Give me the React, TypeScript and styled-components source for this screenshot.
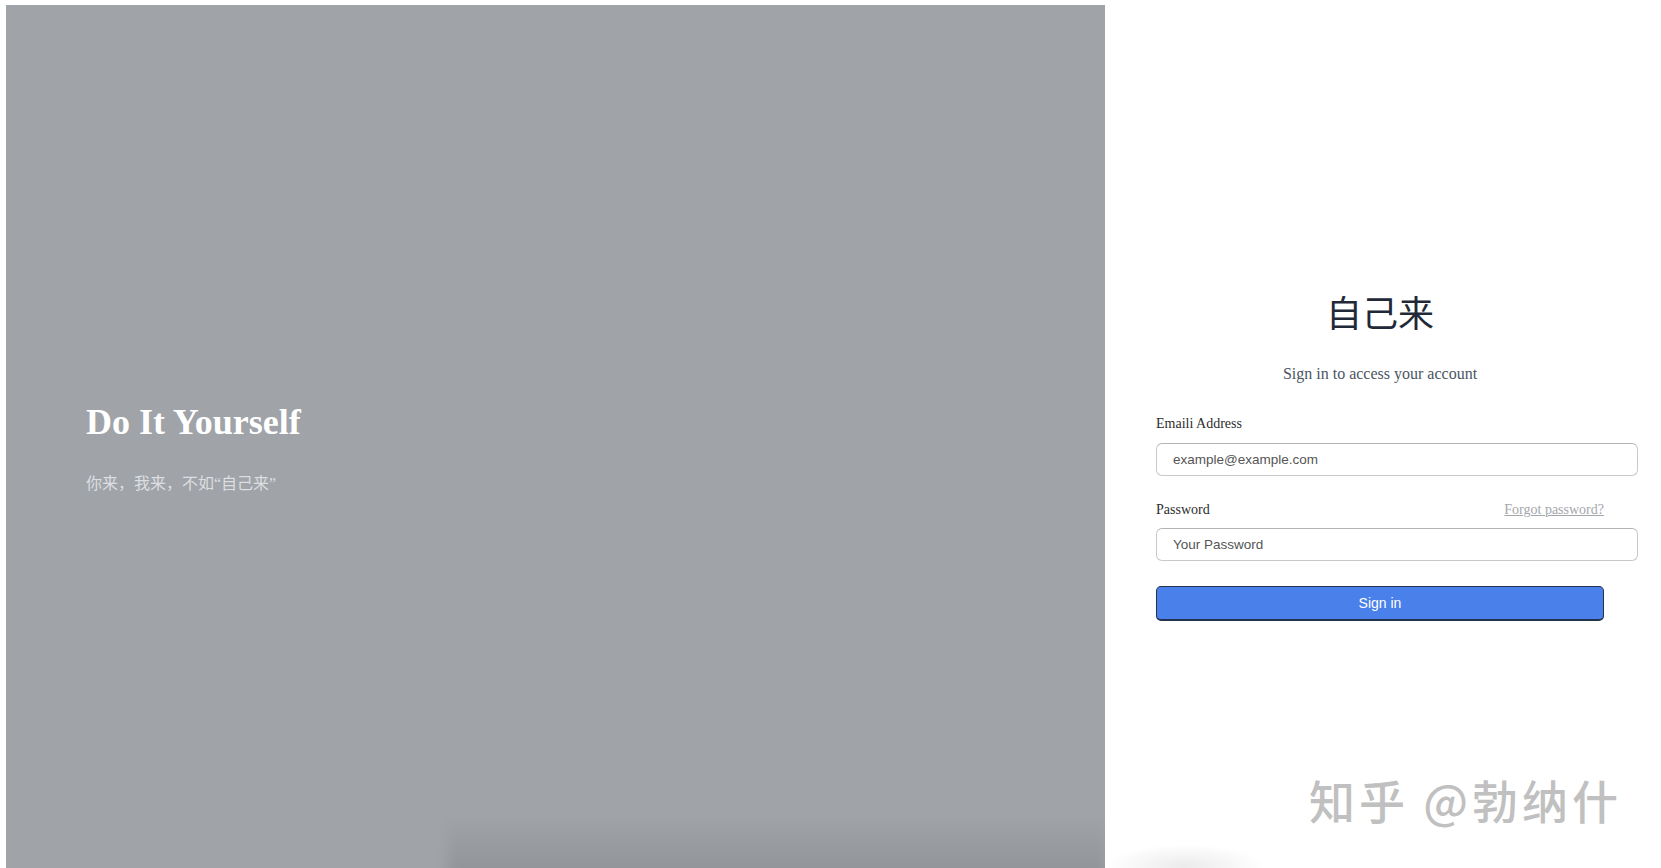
import React from 'react'
import styled, { createGlobalStyle } from 'styled-components'

const GlobalStyle = createGlobalStyle`
    html, body {
        margin: 0;
        padding: 0;
        background: #ffffff;
    }
    * {
        box-sizing: border-box;
    }
`

const Page = styled.div`
    position: relative;
    display: flex;
    width: 1661px;
    height: 868px;
    padding: 5px 0 0 6px;
    overflow: hidden;
    background: #ffffff;
`
const Hero = styled.section`
    position: relative;
    width: 1099px;
    height: 863px;
    background-color: #a0a3a8;
    display: flex;
    flex-direction: column;
    justify-content: flex-start;
    padding: 395px 0 0 80px;
    overflow: hidden;
`
const HeroShade = styled.div`
    position: absolute;
    left: 442px;
    right: 0;
    bottom: -10px;
    height: 60px;
    background: linear-gradient(to bottom, rgba(0, 0, 0, 0), rgba(0, 0, 0, 0.1));
    filter: blur(6px);
`
const HeroTitle = styled.h1`
    margin: 0;
    font-family: "Liberation Serif", "Noto Sans CJK SC", serif;
    font-weight: 700;
    font-size: 36px;
    line-height: 44px;
    color: #ffffff;
`
const HeroText = styled.p`
    margin: 28px 0 0 0;
    font-family: "Liberation Serif", "Noto Sans CJK SC", serif;
    font-size: 16px;
    line-height: 24px;
    color: #dcdee1;
`
const Side = styled.section`
    flex: 1;
    display: flex;
    flex-direction: column;
    padding: 288px 0 0 51px;
`
const Form = styled.form`
    width: 448px;
    display: flex;
    flex-direction: column;
`
const Title = styled.h2`
    margin: 0;
    text-align: center;
    font-family: "Liberation Serif", "Noto Sans CJK SC", serif;
    font-weight: 400;
    font-size: 36px;
    line-height: 44px;
    color: #1f2937;
`
const Subtitle = styled.p`
    margin: 25px 0 0 0;
    text-align: center;
    font-family: "Liberation Serif", serif;
    font-size: 16px;
    line-height: 24px;
    color: #4b5563;
`
const LabelRow = styled.div<{ $top: number }>`
    display: flex;
    justify-content: space-between;
    align-items: center;
    margin-top: ${props => props.$top}px;
    height: 20px;
`
const Label = styled.label`
    font-family: "Liberation Serif", serif;
    font-size: 14px;
    line-height: 20px;
    color: #2d2d2d;
`
const Forgot = styled.a`
    font-family: "Liberation Serif", serif;
    font-size: 14px;
    line-height: 20px;
    color: #a3a6ab;
    text-decoration: underline;
`
const Input = styled.input<{ $top: number }>`
    box-sizing: content-box;
    width: 100%;
    height: 17px;
    margin-top: ${props => props.$top}px;
    padding: 7px 16px;
    border: 1px solid #c9c9c9;
    border-top-color: #b4b4b4;
    border-radius: 6px;
    font-family: "Liberation Sans", Arial, sans-serif;
    font-size: 13.5px;
    line-height: 17px;
    color: #333;
    background: #ffffff;
    outline: none;
    &::placeholder {
        color: #555555;
    }
`
const Button = styled.button`
    margin-top: 25px;
    height: 35px;
    width: 100%;
    border: 1px solid #22324f;
    border-bottom-width: 2px;
    border-radius: 5px;
    background-color: #4a80ea;
    color: #ffffff;
    font-family: "Liberation Sans", Arial, sans-serif;
    font-size: 14px;
    font-weight: 500;
    cursor: pointer;
`
const Watermark = styled.div`
    position: absolute;
    left: 1309px;
    top: 771px;
    font-family: "Noto Sans CJK SC", sans-serif;
    font-size: 46px;
    font-weight: 500;
    line-height: 56px;
    letter-spacing: 4px;
    color: #c0c0c0;
    white-space: nowrap;
    pointer-events: none;
`
const CornerShade = styled.div`
    position: absolute;
    left: 1105px;
    bottom: -20px;
    width: 160px;
    height: 44px;
    background: radial-gradient(ellipse at center, rgba(0, 0, 0, 0.08), rgba(0, 0, 0, 0) 70%);
`

export default function App() {
    return (
        <>
            <GlobalStyle />
            <Page>
                <Hero>
                    <HeroTitle>Do It Yourself</HeroTitle>
                    <HeroText>你来，我来，不如“自己来”</HeroText>
                    <HeroShade />
                </Hero>
                <Side>
                    <Form onSubmit={e => e.preventDefault()}>
                        <Title>自己来</Title>
                        <Subtitle>Sign in to access your account</Subtitle>

                        <LabelRow $top={28}>
                            <Label htmlFor="email">Emaili Address</Label>
                        </LabelRow>
                        <Input $top={9} id="email" type="email" placeholder="example@example.com" />

                        <LabelRow $top={24}>
                            <Label htmlFor="password">Password</Label>
                            <Forgot href="#">Forgot password?</Forgot>
                        </LabelRow>
                        <Input $top={8} id="password" type="password" placeholder="Your Password" />

                        <Button type="submit">Sign in</Button>
                    </Form>
                </Side>
                <CornerShade />
                <Watermark>知乎 @勃纳什</Watermark>
            </Page>
        </>
    )
}
